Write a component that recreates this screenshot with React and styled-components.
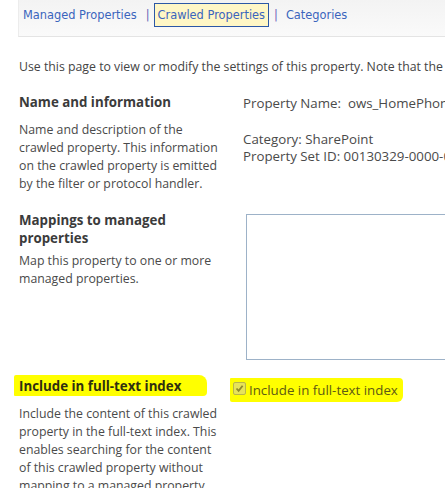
import React from "react";
import styled, { createGlobalStyle } from "styled-components";

const GlobalStyle = createGlobalStyle`
  html, body {
    margin: 0;
    padding: 0;
    background: #fff;
  }
  body {
    font-family: "Open Sans", "Noto Sans", sans-serif;
    color: #444;
    overflow: hidden;
  }
`;

const TABS = [
  { id: "managed", label: "Managed Properties" },
  { id: "crawled", label: "Crawled Properties", active: true },
  { id: "categories", label: "Categories" },
];

const Page = styled.div`
  width: 445px;
  height: 488px;
  overflow: hidden;
`;

const TabBar = styled.nav`
  margin-left: 18px;
  height: 37px;
  display: flex;
  align-items: flex-start;
  padding-top: 3px;
  box-sizing: border-box;
  background: linear-gradient(#f3f3f3, #fafafa);
  border-left: 1px solid #ececec;
  border-bottom: 1px solid #e4e4e4;
  white-space: nowrap;
  font-family: "DejaVu Sans", Verdana, sans-serif;
  font-size: 11.4px;
`;

const Tab = styled.a`
  display: inline-block;
  height: 24px;
  line-height: 23px;
  padding: 0 3px;
  box-sizing: border-box;
  color: #3b65bd;
  text-decoration: none;
  border: 1px solid ${(p) => (p.$active ? "#2c58a6" : "transparent")};
  background: ${(p) => (p.$active ? "#fff7c6" : "transparent")};
`;

const Separator = styled.span`
  display: inline-block;
  line-height: 24px;
  padding: 0 4px 0 5px;
  color: #6b63b8;
`;

const Content = styled.div`
  padding-left: 19px;
  font-size: 12.3px;
  line-height: 18px;
`;

const Intro = styled.p`
  margin: 0;
  padding-top: 21px;
  white-space: nowrap;
`;

const Section = styled.section`
  display: grid;
  grid-template-columns: 205px 1fr;
  column-gap: 19px;
  padding-top: ${(p) => p.$top}px;
`;

const Heading = styled.h3`
  margin: 0 0 ${(p) => p.$gap ?? 10}px;
  font-size: 13.3px;
  line-height: 18px;
  font-weight: 700;
  color: #3b3b3b;
`;

/* marker-pen highlight; negative margins keep the heading at one line height */
const Marked = styled.span`
  display: inline-block;
  margin: -2px 0 -1px -5px;
  padding: 2px 26px 1px 5px;
  background: #ffff00;
  border-radius: 2px 8px 4px 1px;
  color: #2f2f10;
`;

const Description = styled.p`
  margin: 0;
  color: #4a4a4a;
`;

const Field = styled.div`
  padding-top: 2px;
  white-space: nowrap;
  font-size: 13.3px;
  line-height: 17px;
  color: #4a4a4a;
`;

const Line = styled.div`
  margin-bottom: ${(p) => (p.$gap ? "19px" : "0")};
`;

const ListBox = styled.div`
  margin: 3px 0 0 3px;
  height: 146px;
  width: 260px;
  box-sizing: border-box;
  border: 1px solid #9db2c8;
  background: #fff;
`;

const CheckRow = styled.label`
  display: inline-flex;
  align-items: center;
  gap: 3px;
  margin: 1px 0 0 -13px;
  padding: 3px 5px 3px 3px;
  background: #ffff00;
  border-radius: 1px 4px 6px 2px;
  font-size: 13.3px;
  line-height: 18px;
  color: #5e5a14;
  white-space: nowrap;
`;

const Box = styled.span`
  width: 11px;
  height: 11px;
  margin-top: -3px;
  border: 1px solid #b9b64a;
  border-radius: 2px;
  background: #e6e35a;
  display: flex;
  align-items: center;
  justify-content: center;
`;

const Check = () => (
  <svg width="9" height="9" viewBox="0 0 9 9">
    <path d="M1.5 4.5 L3.6 6.8 L7.6 1.8" fill="none" stroke="#8f8a2c" strokeWidth="1.8" />
  </svg>
);

export default function App() {
  return (
    <Page>
      <GlobalStyle />
      <TabBar>
        {TABS.map((tab, i) => (
          <React.Fragment key={tab.id}>
            {i > 0 && <Separator>|</Separator>}
            <Tab href="#" $active={tab.active}>
              {tab.label}
            </Tab>
          </React.Fragment>
        ))}
      </TabBar>
      <Content>
        <Intro>
          Use this page to view or modify the settings of this property. Note that the
          changes you make here apply only to this property.
        </Intro>

        <Section $top={17}>
          <div>
            <Heading>Name and information</Heading>
            <Description>
              Name and description of the crawled property. This information on the
              crawled property is emitted by the filter or protocol handler.
            </Description>
          </div>
          <Field>
            <Line $gap>Property Name:&nbsp; ows_HomePhone</Line>
            <Line>Category: SharePoint</Line>
            <Line>Property Set ID: 00130329-0000-0130-c000-000000131346</Line>
          </Field>
        </Section>

        <Section $top={18}>
          <div>
            <Heading $gap={5}>Mappings to managed properties</Heading>
            <Description>Map this property to one or more managed properties.</Description>
          </div>
          <div>
            <ListBox />
          </div>
        </Section>

        <Section $top={17}>
          <div>
            <Heading>
              <Marked>Include in full-text index</Marked>
            </Heading>
            <Description>
              Include the content of this crawled property in the full-text index. This
              enables searching for the content of this crawled property without mapping
              to a managed property.
            </Description>
          </div>
          <div>
            <CheckRow>
              <Box>
                <Check />
              </Box>
              Include in full-text index
            </CheckRow>
          </div>
        </Section>
      </Content>
    </Page>
  );
}
